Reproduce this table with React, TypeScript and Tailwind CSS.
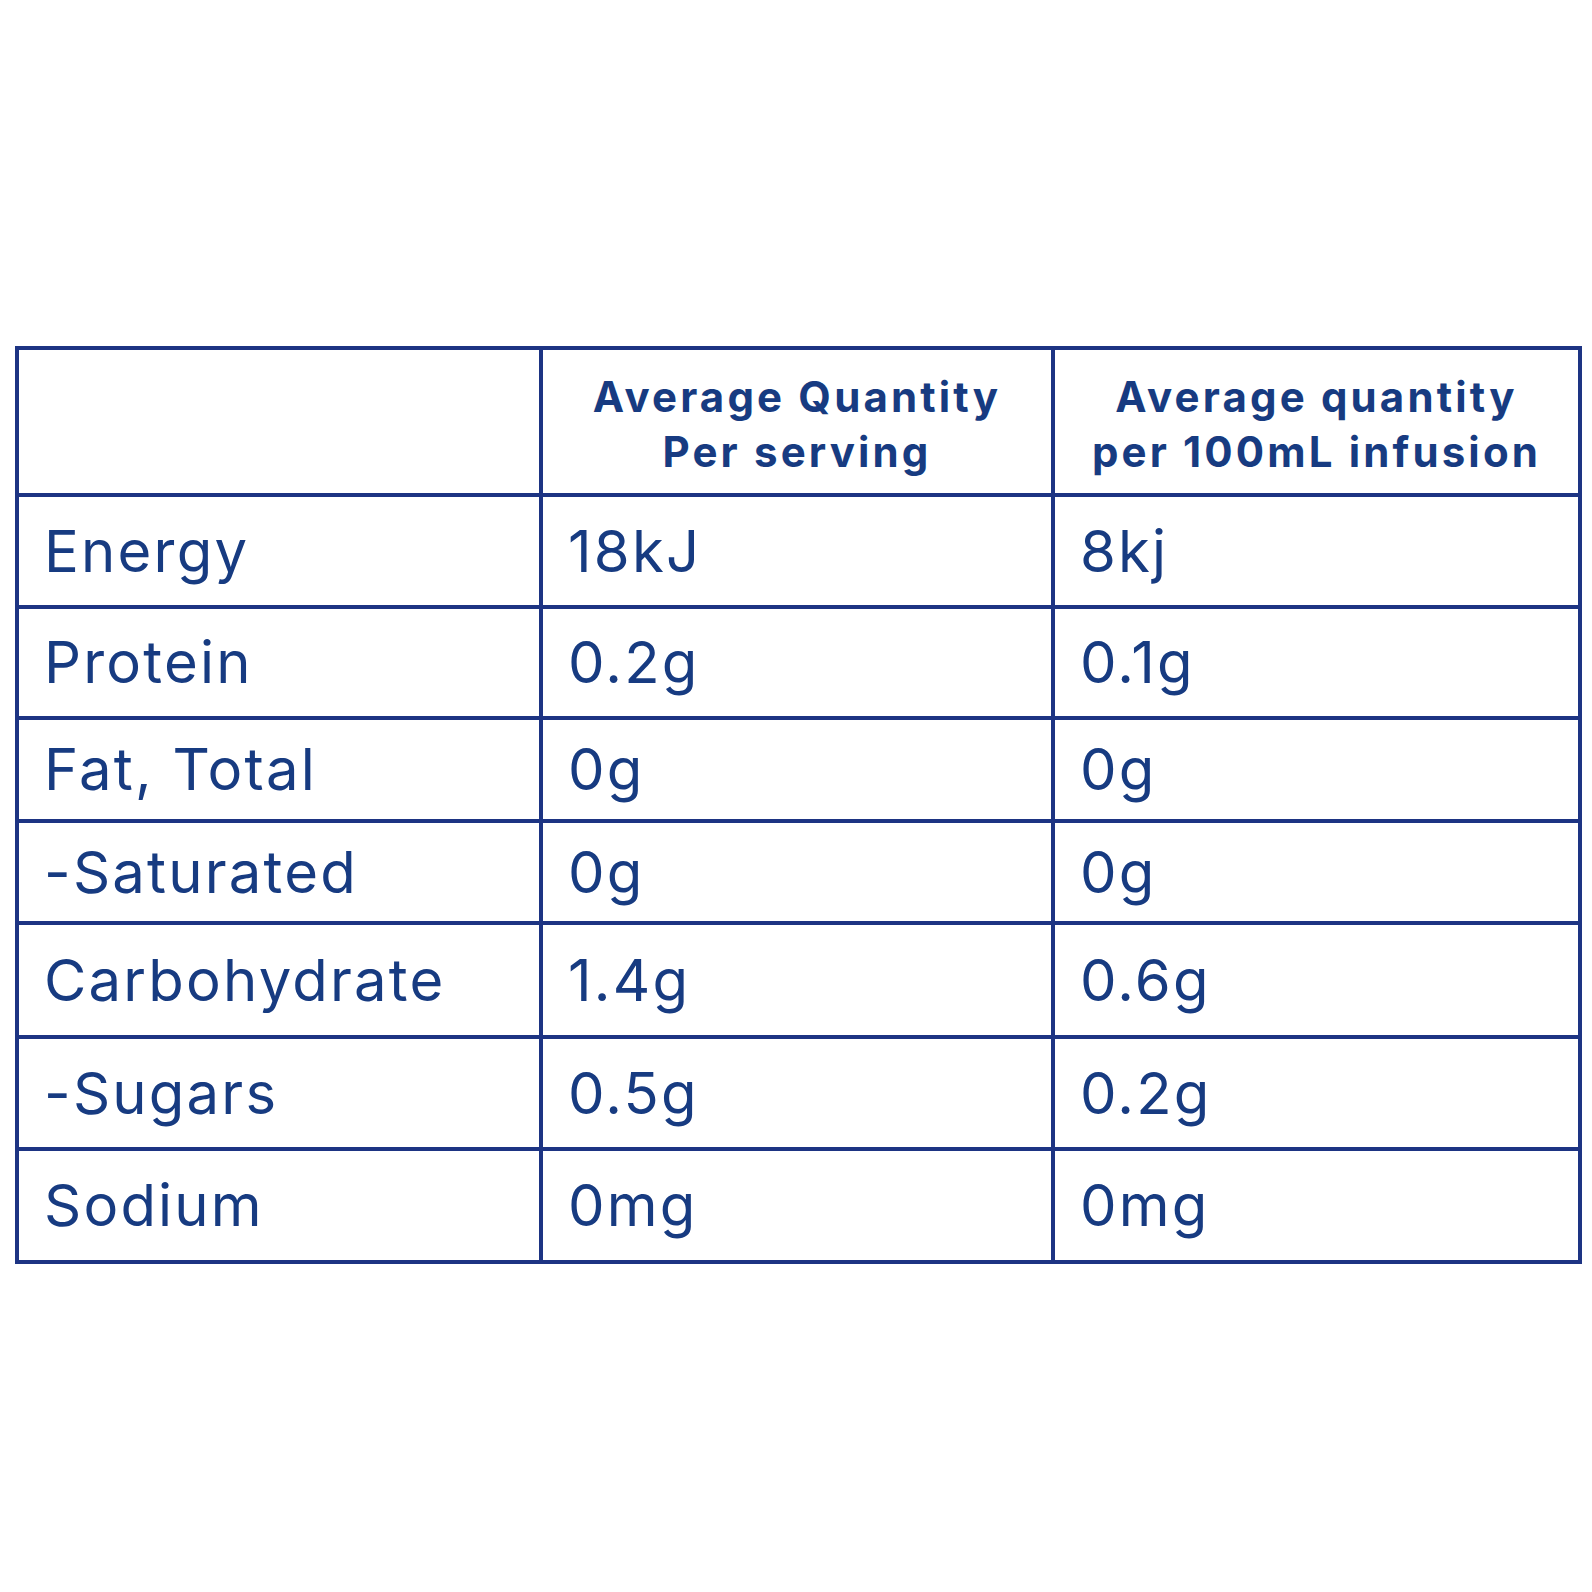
const rows: [string, string, string][] = [
  ["Energy", "18kJ", "8kj"],
  ["Protein", "0.2g", "0.1g"],
  ["Fat, Total", "0g", "0g"],
  ["-Saturated", "0g", "0g"],
  ["Carbohydrate", "1.4g", "0.6g"],
  ["-Sugars", "0.5g", "0.2g"],
  ["Sodium", "0mg", "0mg"],
];

function HeadCell({ lines }: { lines: string[] }) {
  return (
    <div className="flex flex-col items-center justify-center bg-white pt-[4px] text-[42px] font-bold leading-[55px] tracking-[0.075em]">
      {lines.map((l) => (
        <span key={l}>{l}</span>
      ))}
    </div>
  );
}

function Cell({ children }: { children: string }) {
  return (
    <div className="flex items-center bg-white pl-[25px] text-[58px] font-normal tracking-[0.038em]">
      {children}
    </div>
  );
}

export default function App() {
  return (
    <div
      className="h-[1592px] w-[1592px] bg-white pl-[15px] pt-[346px] text-[#173b81]"
      style={{ fontFamily: "Inter, 'Liberation Sans', sans-serif" }}
    >
      <div className="grid w-fit grid-cols-[520px_508px_523px] grid-rows-[143px_108px_107px_99px_98px_110px_108px_109px] gap-[4px] bg-[#1d3483] p-[4px]">
        <div className="bg-white" />
        <HeadCell lines={["Average Quantity", "Per serving"]} />
        <HeadCell lines={["Average quantity", "per 100mL infusion"]} />
        {rows.map(([name, serving, per100]) => (
          <>
            <Cell key={name + "a"}>{name}</Cell>
            <Cell key={name + "b"}>{serving}</Cell>
            <Cell key={name + "c"}>{per100}</Cell>
          </>
        ))}
      </div>
    </div>
  );
}
